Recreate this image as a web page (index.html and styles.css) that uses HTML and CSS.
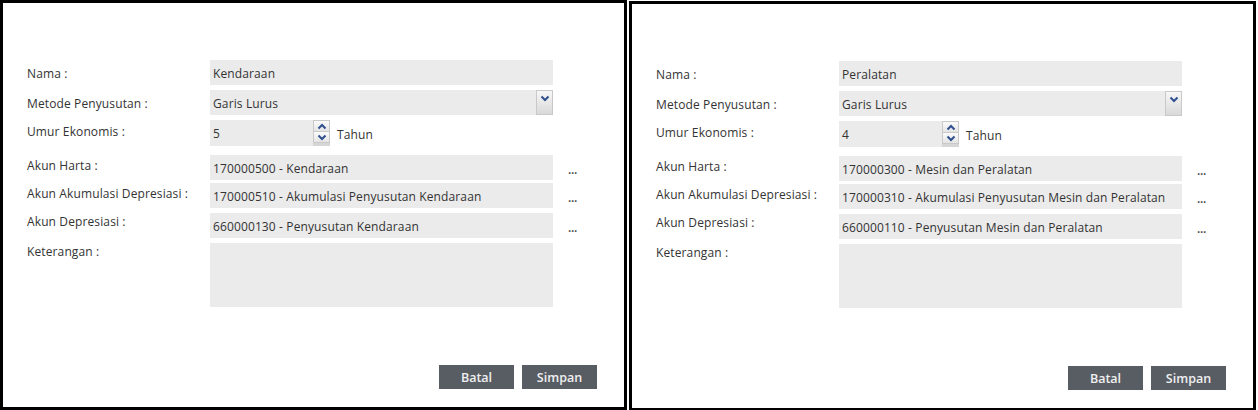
FILE: index.html
```html
<!DOCTYPE html>
<html>
<head>
<meta charset="utf-8">
<link rel="stylesheet" href="styles.css">
</head>
<body>
<div class="wrap">
  <div class="panel">
    <div class="form">
      <div class="lbl p5">Nama :</div>
      <div class="field">Kendaraan</div>
      <div></div>

      <div class="lbl p5">Metode Penyusutan :</div>
      <div class="field select"><span>Garis Lurus</span><span class="dd"><svg width="10" height="7" viewBox="0 0 10 7"><path d="M1.5 1.5 L5 5 L8.5 1.5" fill="none" stroke="#2f4f8f" stroke-width="2"/></svg></span></div>
      <div></div>

      <div class="lbl p3">Umur Ekonomis :</div>
      <div class="spinrow">
        <div class="field num">5</div>
        <div class="spin">
          <span class="sb up"><svg width="10" height="7" viewBox="0 0 10 7"><path d="M1.5 5.5 L5 2 L8.5 5.5" fill="none" stroke="#2f4f8f" stroke-width="2"/></svg></span>
          <span class="sb dn"><svg width="10" height="7" viewBox="0 0 10 7"><path d="M1.5 1.5 L5 5 L8.5 1.5" fill="none" stroke="#2f4f8f" stroke-width="2"/></svg></span>
          <span class="sb rest"></span>
        </div>
        <span class="unit">Tahun</span>
      </div>
      <div></div>

      <div class="lbl p2">Akun Harta :</div>
      <div class="field">170000500 - Kendaraan</div>
      <div class="dots">...</div>

      <div class="lbl p2">Akun Akumulasi Depresiasi :</div>
      <div class="field">170000510 - Akumulasi Penyusutan Kendaraan</div>
      <div class="dots">...</div>

      <div class="lbl p0">Akun Depresiasi :</div>
      <div class="field">660000130 - Penyusutan Kendaraan</div>
      <div class="dots">...</div>

      <div class="lbl p0">Keterangan :</div>
      <div class="field area"></div>
      <div></div>
    </div>
    <div class="actions">
      <button class="btn">Batal</button>
      <button class="btn">Simpan</button>
    </div>
  </div>

  <div class="panel right">
    <div class="form">
      <div class="lbl p5">Nama :</div>
      <div class="field">Peralatan</div>
      <div></div>

      <div class="lbl p5">Metode Penyusutan :</div>
      <div class="field select"><span>Garis Lurus</span><span class="dd"><svg width="10" height="7" viewBox="0 0 10 7"><path d="M1.5 1.5 L5 5 L8.5 1.5" fill="none" stroke="#2f4f8f" stroke-width="2"/></svg></span></div>
      <div></div>

      <div class="lbl p3">Umur Ekonomis :</div>
      <div class="spinrow">
        <div class="field num">4</div>
        <div class="spin">
          <span class="sb up"><svg width="10" height="7" viewBox="0 0 10 7"><path d="M1.5 5.5 L5 2 L8.5 5.5" fill="none" stroke="#2f4f8f" stroke-width="2"/></svg></span>
          <span class="sb dn"><svg width="10" height="7" viewBox="0 0 10 7"><path d="M1.5 1.5 L5 5 L8.5 1.5" fill="none" stroke="#2f4f8f" stroke-width="2"/></svg></span>
          <span class="sb rest"></span>
        </div>
        <span class="unit">Tahun</span>
      </div>
      <div></div>

      <div class="lbl p2">Akun Harta :</div>
      <div class="field">170000300 - Mesin dan Peralatan</div>
      <div class="dots">...</div>

      <div class="lbl p2">Akun Akumulasi Depresiasi :</div>
      <div class="field">170000310 - Akumulasi Penyusutan Mesin dan Peralatan</div>
      <div class="dots">...</div>

      <div class="lbl p0">Akun Depresiasi :</div>
      <div class="field">660000110 - Penyusutan Mesin dan Peralatan</div>
      <div class="dots">...</div>

      <div class="lbl p0">Keterangan :</div>
      <div class="field area"></div>
      <div></div>
    </div>
    <div class="actions">
      <button class="btn">Batal</button>
      <button class="btn">Simpan</button>
    </div>
  </div>
</div>
</body>
</html>
```
FILE: styles.css
```css
html, body {
  margin: 0;
  padding: 0;
  background: #fff;
  overflow: hidden;
}
body {
  font-family: "Open Sans", "Noto Sans", sans-serif;
  font-size: 12px;
  letter-spacing: 0.12px;
  color: #333;
}
.wrap {
  display: flex;
  gap: 2px;
  width: 1258px;
  height: 410px;
}
.panel {
  box-sizing: border-box;
  width: 627px;
  height: 410px;
  border: 3px solid #000;
  display: flex;
  flex-direction: column;
  padding: 57px 27px 18px 24px;
}
.panel.right {
  margin-top: 1px;
}
.form {
  display: grid;
  grid-template-columns: 183px 343px 30px;
  grid-template-rows: 30px 30px 35px 28px 30px 30px 64px;
  align-items: start;
}
.lbl {
  line-height: 16px;
  white-space: nowrap;
}
.p5 { padding-top: 6px; }
.p3 { padding-top: 4px; }
.p2 { padding-top: 3px; }
.p0 { padding-top: 1px; }
.field {
  box-sizing: border-box;
  height: 25px;
  background: #ebebeb;
  padding: 0 3px;
  line-height: 27px;
  white-space: nowrap;
  overflow: hidden;
}
.select {
  display: flex;
  justify-content: space-between;
  padding-right: 0;
}
.dd {
  box-sizing: border-box;
  width: 17px;
  height: 25px;
  border: 1px solid #c9c9c9;
  background: linear-gradient(#f7f7f7, #d9d9d9);
  display: flex;
  justify-content: center;
  align-items: flex-start;
  padding-top: 4px;
}
.dd svg, .sb svg { display: block; }
.spinrow {
  display: flex;
  align-items: center;
}
.num {
  width: 103px;
  height: 26px;
  line-height: 28px;
}
.spin {
  width: 17px;
  height: 26px;
  display: flex;
  flex-direction: column;
  background: #dcdcdc;
}
.sb {
  box-sizing: border-box;
  display: flex;
  justify-content: center;
  align-items: center;
  border: 1px solid #c9c9c9;
  background: linear-gradient(#fbfbfb, #e4e4e4);
}
.sb.up { height: 12px; }
.sb.dn { height: 11px; border-top: none; }
.sb.rest { flex: 1; border: none; background: #d6d6d6; }
.unit {
  margin-left: 7px;
  padding-top: 2px;
}
.dots {
  padding-left: 15px;
  padding-top: 7px;
  font-weight: 600;
  font-size: 12px;
  letter-spacing: -0.3px;
  line-height: 16px;
  color: #444;
}
.area {
  height: 64px;
}
.actions {
  margin-top: auto;
  display: flex;
  justify-content: flex-end;
  gap: 8px;
}
.btn {
  width: 75px;
  height: 24px;
  border: none;
  background: #585d64;
  color: #f0f0f0;
  font-family: "Open Sans", "Noto Sans", sans-serif;
  font-size: 12.5px;
  font-weight: 600;
  padding: 0;
}
```
